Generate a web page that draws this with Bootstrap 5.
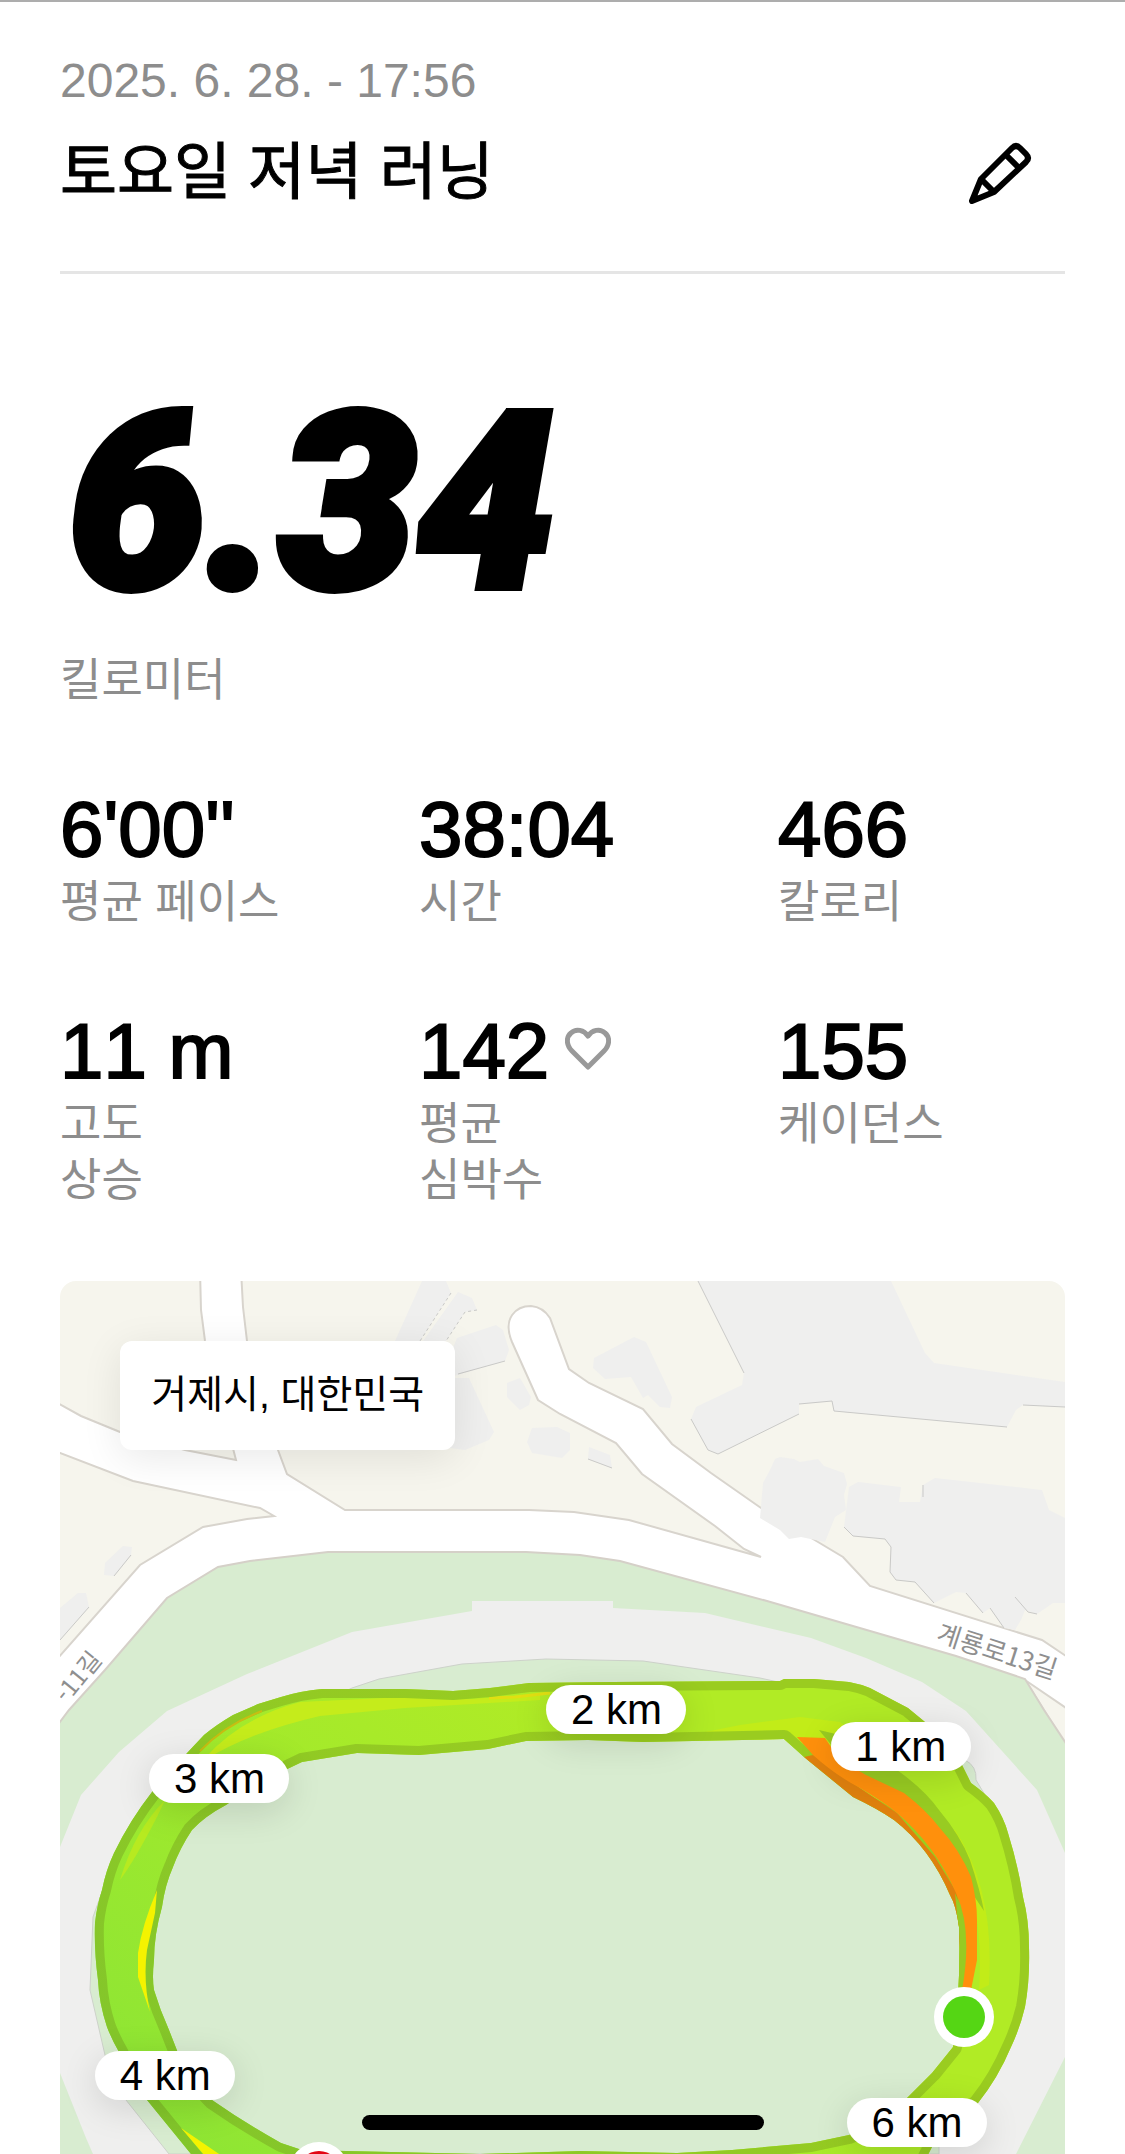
<!DOCTYPE html>
<html lang="ko">
<head>
<meta charset="utf-8">
<meta name="viewport" content="width=device-width, initial-scale=1">
<title>토요일 저녁 러닝</title>
<link rel="stylesheet" href="https://cdn.jsdelivr.net/npm/bootstrap@5.3.0/dist/css/bootstrap.min.css">
<style>
  body { font-family: "Liberation Sans", "Noto Sans CJK KR", sans-serif; font-kerning: none; color: #000; background: #fff; border-top: 2px solid #adadad; overflow-x: hidden; }
  .run-page { padding: 50px 60px 0; }
  .run-head { border-bottom: 3px solid #e5e5e5; padding-bottom: 51px; }
  .run-date { font-size: 48px; line-height: 58px; color: #8d8d8d; }
  .run-title { font-size: 62px; line-height: 94px; font-weight: 400; -webkit-text-stroke: 1px #000; }
  .edit-btn { padding: 0 32px 0 0; line-height: 0; }
  .distance { font-family: Roboto, sans-serif; font-weight: 900; font-style: italic; font-size: 246px; line-height: 300px; -webkit-text-stroke: 8px #000; padding: 79px 0 0 8px; }
  .unit { font-size: 45px; line-height: 56px; color: #8d8d8d; }
  .stats { --bs-gutter-x: 72px; --bs-gutter-y: 74px; padding-top: 74px; }
  .stat-num { font-size: 78px; line-height: 92px; -webkit-text-stroke: 2px #000; }
  .map-box { margin-top: 72px; border-radius: 16px 16px 0 0; background: #fff; }
  .map-box svg { display: block; width: 100%; height: auto; }
  .place { left: 6%; top: 60px; padding: 26px 31px 27px; border-radius: 12px; font-size: 39px; line-height: 56px; box-shadow: 0 8px 40px rgba(0,0,0,.09); }
  .km { width: 140px; height: 49px; border-radius: 25px; font-size: 42px; line-height: 50px; box-shadow: 0 8px 36px rgba(0,0,0,.13); }
  .km-1 { left: 76.7%; top: 50.5%; }
  .km-2 { left: 48.4%; top: 46.3%; }
  .km-3 { left: 8.9%; top: 54.2%; }
  .km-4 { left: 3.5%; top: 88.2%; }
  .km-6 { left: 78.3%; top: 93.6%; }
  .home-bar { bottom: 24px; width: 402px; height: 15px; border-radius: 8px; background: #000; }
</style>
<script src="https://cdn.jsdelivr.net/npm/bootstrap@5.3.0/dist/js/bootstrap.bundle.min.js"></script>
</head>
<body>
<main class="run-page">
  <header class="run-head">
    <div class="run-date">2025. 6. 28. - 17:56</div>
    <div class="d-flex justify-content-between align-items-center pt-3">
      <h1 class="run-title m-0">토요일 저녁 러닝</h1>
      <button class="btn border-0 edit-btn" type="button" aria-label="편집">
        <svg width="66" height="66" viewBox="0 0 66 66" fill="none" stroke="#000" stroke-width="6" stroke-linejoin="round">
          <path d="M5 61 L14 39 L45 8 Q49 4 53 8 L59 14 Q63 18 59 22 L27 52 Z"/>
          <path d="M38 14 L52 28 M14 39 L27 52"/>
        </svg>
      </button>
    </div>
  </header>

  <section>
    <div class="distance">6.34</div>
    <div class="unit">킬로미터</div>
  </section>

  <section class="row row-cols-3 stats">
    <div class="col"><div class="stat-num">6'00''</div><div class="unit">평균 페이스</div></div>
    <div class="col"><div class="stat-num">38:04</div><div class="unit">시간</div></div>
    <div class="col"><div class="stat-num">466</div><div class="unit">칼로리</div></div>
    <div class="col"><div class="stat-num">11 m</div><div class="unit">고도<br>상승</div></div>
    <div class="col">
      <div class="stat-num d-flex align-items-center gap-3">142
        <svg class="mb-1" width="46" height="44" viewBox="0 0 46 44" fill="none" stroke="#999" stroke-width="5" stroke-linejoin="round"><path d="M23 40 L7 24 C1 18 1 10 6 6 C11 1 19 3 23 9 C27 3 35 1 40 6 C45 10 45 18 39 24 Z"/></svg>
      </div>
      <div class="unit">평균<br>심박수</div>
    </div>
    <div class="col"><div class="stat-num">155</div><div class="unit">케이던스</div></div>
  </section>

  <section class="map-box position-relative overflow-hidden">
    <svg viewBox="60 1281 1005 873" role="img" aria-label="러닝 경로 지도">
      <defs>
        <linearGradient id="pace" gradientUnits="userSpaceOnUse" x1="90" y1="2154" x2="560" y2="1690">
          <stop offset="0" stop-color="#8ae436"/><stop offset=".5" stop-color="#9fe92d"/><stop offset="1" stop-color="#b1eb25"/>
        </linearGradient>
        <linearGradient id="paceEdge" gradientUnits="userSpaceOnUse" x1="90" y1="2154" x2="560" y2="1690">
          <stop offset="0" stop-color="#80c52c"/><stop offset="1" stop-color="#9acc20"/>
        </linearGradient>
        <path id="track" fill-rule="evenodd" clip-rule="evenodd" d="M191 2154 L147 2100 Q130 2076 119 2052 Q112 2040 107 2027 Q99 2003 98 1980 Q94 1950 95 1923 Q97 1905 102 1890 Q106 1870 114 1853 Q130 1820 152 1792 L188 1752 L204 1735 Q216 1725 233 1715 L258 1704 L281 1697 Q300 1691 322 1689 L405 1689 L453 1691 L490 1688 L529 1683 L612 1682 L780 1681 L784 1679 L814 1679 L849 1682 Q860 1684 870 1688 L908 1708 L925 1722 L961 1763 L971 1783 Q985 1793 994 1803 Q1004 1818 1008 1833 Q1018 1865 1023 1897 Q1029 1920 1029 1947 Q1030 1980 1025 2007 Q1020 2028 1011 2047 Q998 2078 978 2103 L932 2147 L905 2200 L230 2200 Z
          M784 1739 L743 1740 L643 1742 L588 1740 L526 1741 L488 1749 L419 1755 L357 1753 L302 1762 Q262 1780 226 1805 Q205 1816 192 1830 Q180 1848 173 1867 Q165 1885 162 1907 Q154 1935 154 1960 Q152 1978 154 1990 Q160 2010 169 2030 L178 2053 Q192 2080 212 2100 Q245 2123 281 2143 L302 2150 L480 2154 L580 2151 L677 2153 L732 2150 L811 2143 L849 2135 Q885 2122 908 2097 L932 2073 L953 2047 Q961 1990 959 1927 Q956 1905 950 1895 Q930 1848 894 1820 Q878 1809 853 1797 L804 1757 Z"/>
        <clipPath id="trackClip"><use href="#track" clip-rule="evenodd"/></clipPath>
      </defs>
      <rect x="60" y="1281" width="1005" height="873" fill="#fff"/>
      <!-- land between the roads -->
      <g fill="#f6f5ed" stroke="#d8d4cd" stroke-width="2">
        <path d="M50 1270 L200 1270 L201 1310 L205 1341 L236 1460 L185 1450 L120 1432 L81 1416 L50 1399 Z"/>
        <path d="M241 1270 L243 1307 L247 1341 L278 1450 L287 1474 L345 1510 L529 1510 L574 1512 L629 1520 L761 1557 L744 1549 L715 1526 L642 1474 L616 1443 L560 1414 L538 1400 L512 1342 C502 1318 516 1306 531 1306 Q543 1307 550 1318 L569 1369 L589 1383 L643 1409 L672 1444 L711 1473 L761 1508 L818 1542 L843 1557 L870 1586 L1042 1640 L1075 1662 L1075 1270 Z"/>
        <path d="M50 1450 L60 1453 L133 1481 L260 1508 L274 1516 L247 1519 L203 1527 L140 1565 L50 1667 Z"/>
        <path d="M1025 1680 L1075 1714 L1075 1760 Z"/>
      </g>
      <!-- buildings -->
      <g fill="#efefee">
        <path d="M698 1281 L744 1373 L742 1385 L696 1407 L691 1419 L708 1450 L718 1454 L799 1414 L799 1404 L832 1401 L834 1411 L1007 1427 L1016 1410 L1023 1405 L1065 1407 L1065 1382 L934 1363 L925 1353 L891 1281 Z"/>
        <path d="M780 1457 L794 1459 L800 1462 L818 1459 L824 1466 L844 1473 L847 1484 L844 1495 L846 1510 L835 1517 L825 1542 L801 1537 L789 1539 L780 1530 L760 1518 L763 1483 L770 1470 L775 1459 Z"/>
        <path d="M858 1482 L901 1487 L899 1502 L920 1502 L923 1485 L935 1478 L1042 1490 L1049 1510 L1065 1518 L1065 1603 L1053 1603 L1037 1614 L1025 1610 L1021 1620 L1015 1630 L1004 1628 L990 1608 L983 1613 L966 1593 L956 1592 L934 1603 L915 1582 L896 1580 L890 1572 L891 1547 L885 1539 L853 1536 L844 1527 L849 1487 Z"/>
        <path d="M594 1358 L634 1337 L646 1342 L672 1397 L670 1408 L660 1407 L648 1395 L643 1398 L631 1377 L605 1379 L593 1368 Z"/>
        <path d="M589 1447 L610 1455 L612 1468 L588 1459 Z"/>
        <path d="M422 1281 L446 1281 L451 1293 L420 1341 L395 1341 Z M458 1292 L472 1298 L477 1310 L465 1312 L446 1341 L423 1341 Z"/>
        <path d="M457 1338 L496 1325 L503 1330 L509 1350 L505 1361 L440 1380 Z M450 1378 L469 1378 L494 1432 L489 1440 L465 1450 L450 1448 Z"/>
        <path d="M507 1383 L520 1378 L531 1397 L529 1405 L520 1410 L507 1397 Z M532 1428 L557 1427 L570 1433 L570 1450 L562 1458 L532 1453 L527 1442 Z"/>
        <path d="M123 1546 L132 1547 L131 1555 L114 1576 L104 1575 L105 1563 Z M60 1608 L78 1593 L86 1593 L89 1607 L60 1640 Z"/>
      </g>
      <g fill="none" stroke="#c9c9c7" stroke-width="1">
        <path d="M698 1281 L744 1373 M691 1419 L708 1450 L718 1454 L799 1414 M799 1404 L832 1401 L834 1411 L1007 1427 M1023 1405 L1065 1407 M458 1374 L505 1361"/>
        <path d="M923 1497 L923 1485 M844 1527 L853 1536 L885 1539 L891 1547 L890 1572 L896 1580 L915 1582 L934 1603 M966 1593 L983 1613 M990 1608 L1004 1628 M1015 1597 L1028 1612 L1037 1614"/>
        <path d="M89 1607 L60 1640 M131 1555 L114 1576 M588 1459 L612 1468"/>
        <path stroke-dasharray="3 3" d="M451 1293 L420 1341 M477 1310 L465 1312 L446 1341"/>
      </g>
      <!-- stadium -->
      <path fill="#d8ecd0" stroke="#d5d0c8" stroke-width="2" d="M328 1552 L526 1552 L580 1555 L620 1561 L767 1601 L956 1656 L1025 1679 L1044 1710 L1075 1757 L1075 2170 L50 2170 L50 1735 L69 1710 L105 1670 L167 1598 L218 1567 L250 1561 Z"/>
      <path fill="#efefee" d="M472 1601 L472 1611 L352 1632 L247 1674 L167 1711 L119 1752 L81 1795 L60 1847 L60 2073 L86 2138 L93 2154 L1016 2154 L1065 2057 L1065 1853 L1037 1790 L966 1711 L922 1682 L866 1658 L811 1638 L705 1613 L613 1608 L613 1601 Z"/>
      <path fill="#d8ecd0" stroke="#cdd2ca" stroke-width="1" d="M352 1688 L379 1679 L462 1664 L546 1659 L643 1661 L760 1678 L860 1700 L965 1760 Q977 1766 976 1780 L1000 1820 L1020 1930 L1015 1990 L990 2060 L939 2130 L939 2154 L169 2154 L126 2100 L105 2055 L90 1990 L93 1917 L110 1870 L180 1770 Z"/>
      <!-- route, coloured by pace -->
      <use href="#track" fill="url(#pace)"/>
      <g clip-path="url(#trackClip)">
        <path fill="#c5ec1b" d="M205 1758 Q240 1718 300 1702 L405 1697 L470 1699 L540 1694 L540 1700 L405 1708 L320 1716 Q250 1732 205 1760 Z"/>
        <path fill="#b7ea20" d="M120 1880 Q135 1830 165 1800 L158 1815 Q135 1860 120 1880 Z"/>
        <path fill="#c2ec18" d="M700 1733 L740 1725 L800 1717 L840 1722 L870 1745 L800 1745 Z M955 1830 Q995 1890 989 1985 L979 1990 Q985 1900 950 1830 Z"/>
        <path fill="none" stroke="#e0df12" stroke-width="3" d="M489 1698 L515 1697 L550 1693"/>
        <use href="#track" fill="none" stroke="url(#paceEdge)" stroke-width="18" stroke-linejoin="round"/>
        <path fill="none" stroke="#c8bd12" stroke-width="2" d="M200 1751 Q225 1725 262 1711"/>
        <path fill="#f4f300" d="M157 1890 Q142 1925 138 1953 L138 1977 L150 2012 Q143 1980 147 1950 L155 1913 Z M181 2128 L222 2156 L205 2156 Z"/>
        <path fill="#98cb22" d="M819 1730 L840 1735 L897 1770 Q925 1790 939 1810 Q960 1835 970 1860 Q980 1890 984 1911 L970 1890 L930 1830 L860 1780 Z"/>
        <path fill="#df800e" d="M804 1757 L813 1755 L860 1788 L897 1813 L935 1857 L957 1893 L961 1920 L958 1965 L955 1990 L950 1990 L945 1900 L890 1830 L840 1798 Z"/>
        <path fill="#98cb22" d="M955 1893 Q968 1920 967 1945 L963 1990 L954 1990 L960 1945 Z"/>
        <path fill="#ff900c" d="M797 1737 L825 1738 L840 1760 L866 1775 L904 1793 Q926 1810 939 1827 Q960 1850 971 1877 Q977 1900 977 1920 L977 1960 L971 1990 L962 1990 Q973 1930 956 1893 Q935 1845 897 1813 Q885 1803 860 1788 Q835 1775 813 1755 Z"/>
      </g>
      <!-- road names -->
      <g font-family="'Noto Sans CJK KR', sans-serif" font-size="26" fill="#8f8f8f">
        <text transform="translate(935 1641) rotate(18)">계룡로13길</text>
        <text transform="translate(103 1660) rotate(-51)" text-anchor="end" font-size="24">-11길</text>
      </g>
      <!-- finish and start -->
      <circle cx="319" cy="2172" r="30" fill="#fff"/><circle cx="319" cy="2172" r="21" fill="#e20613"/>
      <circle cx="964" cy="2017" r="30" fill="#fff"/><circle cx="964" cy="2017" r="21" fill="#55d614"/>
    </svg>
    <div class="place position-absolute bg-white">거제시, 대한민국</div>
    <span class="km km-1 position-absolute bg-white text-center">1 km</span>
    <span class="km km-2 position-absolute bg-white text-center">2 km</span>
    <span class="km km-3 position-absolute bg-white text-center">3 km</span>
    <span class="km km-4 position-absolute bg-white text-center">4 km</span>
    <span class="km km-6 position-absolute bg-white text-center">6 km</span>
  </section>
</main>
<div class="home-bar position-fixed start-50 translate-middle-x"></div>
</body>
</html>
